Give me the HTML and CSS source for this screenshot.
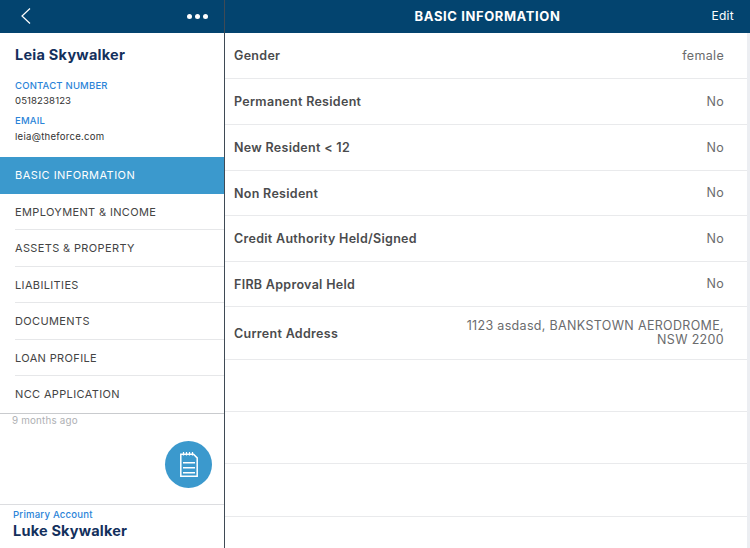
FILE: index.html
```html
<!DOCTYPE html>
<html lang="en">
<head>
<meta charset="utf-8">
<title>Basic Information</title>
<link rel="stylesheet" href="styles.css">
</head>
<body>
<div class="app">
  <aside class="side">
    <header class="side-bar">
      <svg class="back" width="12" height="18" viewBox="0 0 12 18"><path d="M10 1.500 2 9l8 7.500" fill="none" stroke="#fff" stroke-width="1.200"/></svg>
      <div class="dots"><i></i><i></i><i></i></div>
    </header>
    <section class="profile">
      <h1 class="name">Leia Skywalker</h1>
      <div class="cap cap-first">CONTACT NUMBER</div>
      <div class="info">0518238123</div>
      <div class="cap cap-second">EMAIL</div>
      <div class="info info-mail">leia@theforce.com</div>
    </section>
    <nav class="menu">
      <a class="item active">BASIC INFORMATION</a>
      <a class="item">EMPLOYMENT &amp; INCOME</a>
      <a class="item">ASSETS &amp; PROPERTY</a>
      <a class="item">LIABILITIES</a>
      <a class="item">DOCUMENTS</a>
      <a class="item">LOAN PROFILE</a>
      <a class="item last">NCC APPLICATION</a>
    </nav>
    <section class="notes">
      <div class="ago">9 months ago</div>
      <button class="fab">
        <svg width="18" height="25" viewBox="0 0 18 25"><path d="M.8 2.200h12.700l3.700 3.700v18.300H.8z" fill="none" stroke="#fff" stroke-width="1.500"/><path d="M3.500 0v3.500M6.500 0v3.500M9.500 0v3.500M12.500 0v3.500" stroke="#fff" stroke-width="1.200"/><path d="M3 10.700h12M3 15.700h12M3 20.700h12" stroke="#fff" stroke-width="1.600"/></svg>
      </button>
    </section>
    <footer class="account">
      <div class="acc-label">Primary Account</div>
      <div class="acc-name">Luke Skywalker</div>
    </footer>
  </aside>
  <main class="main">
    <header class="main-bar">
      <span class="title">BASIC INFORMATION</span>
      <span class="edit">Edit</span>
    </header>
    <div class="rows">
      <div class="row h46"><span class="label">Gender</span><span class="value">female</span></div>
      <div class="row h46"><span class="label">Permanent Resident</span><span class="value">No</span></div>
      <div class="row h46"><span class="label">New Resident &lt; 12</span><span class="value">No</span></div>
      <div class="row h45"><span class="label">Non Resident</span><span class="value">No</span></div>
      <div class="row h46"><span class="label">Credit Authority Held/Signed</span><span class="value">No</span></div>
      <div class="row h45"><span class="label">FIRB Approval Held</span><span class="value">No</span></div>
      <div class="row h53"><span class="label">Current Address</span><span class="value addr">1123 asdasd, BANKSTOWN AERODROME,<br>NSW 2200</span></div>
      <div class="row h52"></div>
      <div class="row h52"></div>
      <div class="row h53"></div>
    </div>
  </main>
</div>
</body>
</html>
```
FILE: styles.css
```css
* { box-sizing: border-box; }
html, body { margin: 0; padding: 0; }
body { width: 750px; height: 548px; overflow: hidden; background: #fff; font-family: "Inter", "Liberation Sans", sans-serif; }
.app { display: flex; width: 750px; height: 548px; }

.side { width: 225px; height: 548px; border-right: 1px solid #3f4a55; display: flex; flex-direction: column; flex: none; }
.side-bar { height: 33px; background: #03446f; display: flex; align-items: center; justify-content: space-between; padding: 0 15px 1px 20px; flex: none; }
.back { display: block; }
.dots { display: flex; gap: 3px; margin-right: 1px; }
.dots i { width: 5px; height: 5px; border-radius: 50%; background: #fff; display: block; }

.profile { height: 124px; padding: 13px 15px 0; flex: none; }
.name { margin: 0; font-size: 14.500px; line-height: 18px; font-weight: 700; color: #13305c; letter-spacing: 0.25px; }
.cap { font-size: 9.500px; line-height: 12px; color: #2b84d8; letter-spacing: 0.2px; font-weight: 500; }
.cap-first { margin-top: 15.500px; }
.cap-second { margin-top: 8.500px; }
.info { font-size: 9.600px; line-height: 12px; margin-top: 3px; color: #333; letter-spacing: 0.1px; }
.info-mail { margin-top: 4px; letter-spacing: 0.25px; }

.menu { flex: none; border-bottom: 1px solid #c9cbce; }
.item { display: flex; align-items: center; height: 36.500px; padding-left: 15px; font-size: 11px; font-weight: 400; color: #444; letter-spacing: 0.36px; position: relative; }
.item::after { content: ""; position: absolute; left: 15px; right: 0; bottom: 0; height: 1px; background: #e6e7e9; }
.item.last::after { display: none; }
.item.active { background: #3b99cd; color: #fff; letter-spacing: 0.45px; }
.item.active::after { display: none; }

.notes { flex: 1; min-height: 0; display: flex; flex-direction: column; border-bottom: 1px solid #dcdde0; padding: 1px 12px 17px 12px; }
.ago { font-size: 9.800px; line-height: 12px; color: #aeb0b3; letter-spacing: 0.2px; }
.fab { width: 47px; height: 47px; border: 0; padding: 0; margin: 14px 0 0 auto; border-radius: 50%; background: #3b99cd; display: flex; align-items: center; justify-content: center; flex: none; }
.fab svg { display: block; }

.account { height: 43px; padding: 4px 13px 0; flex: none; }
.acc-label { font-size: 9.600px; line-height: 12px; color: #2b84d8; letter-spacing: 0.2px; font-weight: 500; }
.acc-name { font-size: 14.500px; line-height: 18px; margin-top: 1px; font-weight: 700; color: #13305c; letter-spacing: 0.2px; }

.main { flex: 1; min-width: 0; display: flex; flex-direction: column; height: 548px; }
.main-bar { height: 33px; background: #03446f; display: flex; align-items: center; color: #fff; position: relative; padding-bottom: 1px; flex: none; }
.title { margin: 0 auto; font-size: 13px; font-weight: 700; letter-spacing: 0.6px; }
.edit { position: absolute; right: 16px; top: 9px; font-size: 12px; line-height: 14px; letter-spacing: 0.3px; }

.rows { flex: 1; border-right: 3px solid #eceef2; }
.row { display: flex; align-items: center; justify-content: space-between; padding: 0 23px 0 9px; border-bottom: 1px solid #e9eaec; }
.h45 { height: 45px; }
.h46 { height: 46px; }
.h52 { height: 52px; }
.h53 { height: 53px; }
.label { font-size: 12.500px; font-weight: 600; color: #4a4b4d; letter-spacing: 0.3px; }
.value { font-size: 12.500px; color: #6a6b6d; text-align: right; letter-spacing: 0.33px; line-height: 14px; }
```
